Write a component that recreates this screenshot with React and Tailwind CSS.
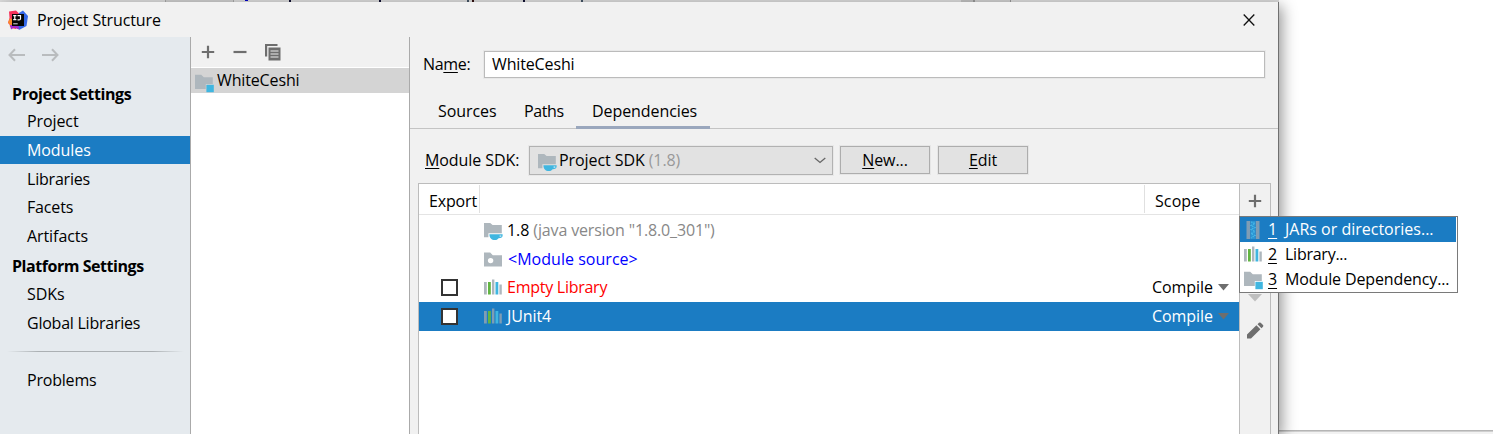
const FolderBase = ({ fill = "#aeb7bd" }) => (
  <path d="M1 2.6h6.2l2.6 2.6H19V16.6H1Z" fill={fill} />
);

function FolderModuleIcon() {
  return (
    <svg className="h-[20px] w-[20px] shrink-0" viewBox="0 0 20 20">
      <path d="M1 1.700h6.200l2.600 2.500H18.800V11H11.800v5H1Z" fill="#aeb7bd" />
      <rect x="12.400" y="11.800" width="7.400" height="7.400" fill="#40b6e0" />
    </svg>
  );
}

function SdkIcon() {
  return (
    <svg className="h-[20px] w-[20px] shrink-0" viewBox="0 0 20 20">
      <path d="M1 2h6.200l2.400 2H18.800V12.300H5.400v4H1Z" fill="#aeb7bd" />
      <path
        d="M6.400 13.200h13.200v1.500c0 1.600-1.400 2.500-4 2.500-1 1.300-2.200 1.900-3.800 1.900-3.200 0-5.400-2.200-5.400-5.900Z"
        fill="#40b6e0"
      />
      <rect x="16.600" y="14.500" width="1.700" height="1.200" fill="#d9eef6" />
    </svg>
  );
}

function SourceIcon() {
  return (
    <svg className="h-[20px] w-[20px] shrink-0" viewBox="0 0 20 20">
      <FolderBase />
      <circle cx="7.600" cy="10.600" r="2.700" fill="#fff" />
    </svg>
  );
}

function LibraryIcon({ gray = "#aeb7bd" }) {
  return (
    <svg className="h-[20px] w-[20px] shrink-0" viewBox="0 0 20 20">
      <rect x="1" y="4" width="2.800" height="12.500" fill={gray} />
      <rect x="5" y="4" width="2.800" height="12.500" fill="#62b543" />
      <rect x="9" y="1.500" width="2.400" height="15" fill={gray} />
      <rect x="12.500" y="4" width="2.800" height="12.500" fill="#40b6e0" />
      <rect x="16.400" y="6.500" width="2.400" height="10" fill={gray} />
    </svg>
  );
}

function JarIcon() {
  return (
    <svg className="h-[20px] w-[20px] shrink-0" viewBox="0 0 20 20">
      <rect x="3.500" y="1" width="3.800" height="18" fill="#7f9db5" />
      <rect x="12.700" y="1" width="3.800" height="18" fill="#7f9db5" />
      <rect x="7.700" y="1" width="4.600" height="18" fill="#2b95d3" />
      <path
        d="M8 2l4 1.500-4 2 4 2-4 2 4 2-4 2 4 2-4 2.500"
        fill="none"
        stroke="#48b8e8"
        strokeWidth="1.200"
        strokeDasharray="1.500 1"
      />
    </svg>
  );
}

function AppLogo() {
  return (
    <svg className="h-[20px] w-[20px]" viewBox="0 0 20 20">
      <path d="M1 1.500 8 .5l4 4L8 19l-5-1-1-3-2-2 1.500-5Z" fill="#f5325b" />
      <path d="M0 12.500 2 8l4 3-1 6H2l-.5-3Z" fill="#fb8a2b" />
      <path d="M11 3l4-2.500L20 6l-1.500 10-7 3.800-6-3Z" fill="#3568e8" />
      <path d="M2 15h8l1.500 4.500L6 17.500 3 19.500Z" fill="#a32bd0" />
      <rect x="4" y="4" width="12" height="12" fill="#060606" />
      <path d="M5.200 5.700h3.200M6.800 5.700v4M5.200 9.700h3.200M9.500 5.700h3v3q0 1.200-1.400 1.200H9.500" fill="none" stroke="#fff" strokeWidth="1.200" />
      <rect x="5.200" y="13.300" width="4.500" height="1" fill="#ddd" />
    </svg>
  );
}

function Arrow({ flip }) {
  return (
    <svg className={flip ? "h-[14px] w-[18px] -scale-x-100" : "h-[14px] w-[18px]"} viewBox="0 0 18 14" fill="none" stroke="#b9bcbe" strokeWidth="2">
      <path d="M17 7H1.500M7 1.300 1.500 7l5.500 5.700" />
    </svg>
  );
}

function Plus() {
  return (
    <svg className="h-[14px] w-[14px]" viewBox="0 0 14 14" stroke="#6e6e6e" strokeWidth="2.200">
      <path d="M.8 7h12.400M7 .8v12.400" />
    </svg>
  );
}

function NavItem({ label, className }) {
  return <div className={"flex h-[28.700px] items-center pl-[27px] " + (className || "")}>{label}</div>;
}

function Checkbox() {
  return <div className="h-[17px] w-[17px] border-2 border-[#333] bg-white" />;
}

function Caret({ className }) {
  return (
    <svg className={"h-[7px] w-[11px] " + className} viewBox="0 0 11 7">
      <path d="M0 0h11L5.500 6.500Z" fill="currentColor" />
    </svg>
  );
}

function Row({ className, exported, icon, children, scope, caret }) {
  return (
    <div className={"flex items-center " + className}>
      <div className="flex w-[61px] shrink-0 justify-center">{exported && <Checkbox />}</div>
      <div className="flex flex-1 items-center gap-[4px] pl-[3px]">
        {icon}
        <span className="pb-[2px]">{children}</span>
      </div>
      {scope && (
        <div className="flex w-[87px] items-center gap-[5px]">
          <span className="pb-[2px]">Compile</span>
          <Caret className={caret} />
        </div>
      )}
    </div>
  );
}

function MenuItem({ icon, num, children, className }) {
  return (
    <div className={"mr-px flex h-[25px] items-center pl-[3px] " + (className || "")}>
      {icon}
      <span className="ml-[5px] w-[17px] pb-[2px] underline decoration-1 underline-offset-[3px]">{num}</span>
      <span className="pb-[2px]">{children}</span>
    </div>
  );
}

const U = ({ children }) => <span className="underline decoration-1 underline-offset-[2px]">{children}</span>;

export default function App() {
  return (
    <div className="relative flex h-[434px] w-[1493px] flex-col overflow-hidden whitespace-nowrap bg-white font-['Open_Sans','Noto_Sans',sans-serif] text-[16px] leading-[20px] tracking-[-0.08px] text-black">
      <div className="flex h-[2px] w-full shrink-0 bg-[#dcdcdc] *:shrink-0">
        <div className="ml-[165px] h-full w-[69px] border-x border-[#aaa] bg-[#cfcfcf]" />
        <div className="ml-[11px] h-px w-[3px] bg-[#00c]" />
        <div className="ml-[41px] h-full w-[2px] bg-[#113]" />
        <div className="ml-[88px] h-full w-[2px] bg-[#113]" />
        <div className="ml-[86px] h-full w-[2px] bg-[#456]" />
        <div className="ml-[3px] h-full w-[2px] bg-[#311]" />
        <div className="ml-[49px] h-full w-[2px] bg-[#113]" />
        <div className="ml-[56px] h-full w-[2px] bg-[#456]" />
        <div className="ml-[378px] h-full w-[14px] border-r-2 border-[#999] bg-[#c2c2c2]" />
        <div className="h-full w-[36px] border-r border-[#999] bg-[#d0d0d0]" />
        <div className="h-full w-[268px]" />
        <div className="h-full w-[214px] bg-white" />
      </div>

      <div className="flex min-h-0 flex-1">
        <div className="z-10 flex w-[1279px] shrink-0 flex-col border-r border-[#707070] bg-[#f1f1f1] shadow-[3px_4px_14px_rgba(0,0,0,0.42)]">
          <header className="flex h-[35px] shrink-0 items-center pl-[8px]">
            <AppLogo />
            <span className="ml-[9px] flex-1 tracking-[-0.12px]">Project Structure</span>
            <svg className="mr-[23px] h-[12px] w-[12px]" viewBox="0 0 12 12" stroke="#111" strokeWidth="1.300">
              <path d="M.7.5l10.600 11M11.300.5.7 11.500" />
            </svg>
          </header>

          <div className="flex min-h-0 flex-1">
            <nav className="flex w-[191px] shrink-0 flex-col border-r border-[#aaa] bg-[#e5eaee]">
              <div className="flex h-[43px] items-start gap-[15px] pl-[8px] pt-[11px]">
                <Arrow />
                <Arrow flip />
              </div>
              <div className="flex h-[27px] items-center pl-[12px] pt-[1px] font-bold tracking-[-0.38px]">Project Settings</div>
              <NavItem label="Project" className="tracking-[-0.1px]" />
              <NavItem label="Modules" className="!h-[28px] bg-[#1b7cc3] text-white" />
              <NavItem label="Libraries" className="mt-[1px] tracking-[-0.2px]" />
              <NavItem label="Facets" className="pb-[1px] tracking-[-0.15px]" />
              <NavItem label="Artifacts" />
              <div className="flex h-[30px] items-center pl-[12px] pt-[1px] font-bold tracking-[-0.45px]">Platform Settings</div>
              <NavItem label="SDKs" className="pb-[2px]" />
              <NavItem label="Global Libraries" className="pb-[2px] tracking-[-0.24px]" />
              <div className="ml-[7px] mt-[13px] h-px w-[177px] bg-[linear-gradient(to_right,transparent,#abb0b3_18%,#abb0b3_82%,transparent)]" />
              <NavItem label="Problems" className="mt-[14px] tracking-[-0.2px]" />
            </nav>

            <section className="flex w-[219px] shrink-0 flex-col border-r border-[#aaa] bg-white">
              <div className="flex h-[30px] shrink-0 items-center bg-[#f1f1f1] pl-[10px]">
                <Plus />
                <svg className="ml-[18px] h-[14px] w-[14px]" viewBox="0 0 14 14" stroke="#6e6e6e" strokeWidth="2.200">
                  <path d="M.5 7h13" />
                </svg>
                <svg className="ml-[17px] h-[18px] w-[18px]" viewBox="0 0 18 18" fill="none">
                  <path d="M2.100 13.500V2H13.500" stroke="#6e6e6e" strokeWidth="2.200" />
                  <rect x="4.500" y="4.500" width="12" height="13" fill="#6e6e6e" />
                  <path d="M6.500 8h8M6.500 11h8M6.500 14h8" stroke="#eee" strokeWidth="1.200" />
                </svg>
              </div>
              <div className="mt-px flex h-[25px] items-center bg-[#d4d4d4] pl-[3px]">
                <div className="pt-[5px]"><FolderModuleIcon /></div>
                <span className="ml-[3px] pb-[2px] tracking-[-0.14px]">WhiteCeshi</span>
              </div>
            </section>

            <main className="flex min-w-0 flex-1 flex-col">
              <div className="flex h-[55px] shrink-0 items-center pl-[13px] pr-[13px]">
                <label className="w-[61px] pb-[2px] tracking-[-0.3px]">Na<U>m</U>e:</label>
                <div className="flex h-[27px] flex-1 items-center border border-[#bbb] bg-white pb-[2px] pl-[7px] tracking-[-0.14px] shadow-[0_0_0_1px_#e8e8e8]">WhiteCeshi</div>
              </div>
              <div className="flex h-[37px] shrink-0 border-b border-[#c4c4c4] pl-[12px]">
                <div className="flex h-[37px] w-[87px] items-center pl-[16px]">Sources</div>
                <div className="flex h-[37px] w-[67px] items-center pl-[15px] tracking-[-0.4px]">Paths</div>
                <div className="flex h-[37px] w-[134px] items-center border-b-3 border-[#9aa7bd] pl-[16px] pt-[3px]">Dependencies</div>
              </div>
              <div className="flex h-[54px] shrink-0 items-center pl-[15px] pt-[8px]">
                <label className="w-[104px]"><U>M</U>odule SDK:</label>
                <div className="flex h-[29px] w-[304px] items-center border border-[#b2b2b2] bg-[#e2e2e2] pl-[7px] shadow-[0_0_0_1px_#e8e8e8]">
                  <div className="pt-[3px]"><SdkIcon /></div>
                  <span className="ml-[2px] flex-1">Project SDK <span className="text-[#999]">(1.8)</span></span>
                  <svg className="mr-[6px] h-[7px] w-[12px]" viewBox="0 0 12 7" fill="none" stroke="#666" strokeWidth="1.300">
                    <path d="M.7 1 6 5.500 11.300 1" />
                  </svg>
                </div>
                <div className="ml-[7px] flex h-[28px] w-[90px] items-center justify-center border border-[#adadad] bg-[#e2e2e2] shadow-[0_0_0_1px_#e6e6e6]"><U>N</U>ew...</div>
                <div className="ml-[8px] flex h-[28px] w-[90px] items-center justify-center border border-[#adadad] bg-[#e2e2e2] shadow-[0_0_0_1px_#e6e6e6]"><U>E</U>dit</div>
              </div>

              <div className="ml-[8px] flex min-h-0 w-[853px] flex-1 border-x border-t border-[#bcbcbc]">
                <div className="flex w-[820px] shrink-0 flex-col bg-white">
                  <div className="flex h-[31px] shrink-0 items-stretch border-b border-[#e4e4e4] pb-[1px] pt-[1px]">
                    <div className="flex w-[61px] items-center border-r border-[#e0e0e0] pl-[10px] pt-[3px] tracking-[-0.16px]">Export</div>
                    <div className="w-[665px] border-r border-[#e0e0e0]" />
                    <div className="flex flex-1 items-center pl-[10px] pt-[3px] tracking-[0.1px]">Scope</div>
                  </div>
                  <Row className="h-[30px] pt-[2px]" icon={<SdkIcon />}>1.8 <span className="tracking-[-0.15px] text-[#888]">(java version "1.8.0_301")</span></Row>
                  <Row className="h-[28px] pt-[1px]" icon={<SourceIcon />}><span className="pl-[1px] tracking-[0.03px] text-[#0000ff]">&lt;Module source&gt;</span></Row>
                  <Row className="h-[29px]" exported scope caret="text-[#6e6e6e]" icon={<LibraryIcon />}><span className="tracking-[-0.26px] text-[#f00]">Empty Library</span></Row>
                  <Row className="h-[29px] bg-[#1b7cc3] text-white" exported scope caret="text-[#6e6e6e]" icon={<LibraryIcon gray="#7f9db5" />}>JUnit4</Row>
                </div>
                <div className="flex flex-1 flex-col items-center border-l border-[#bcbcbc]">
                  <div className="mt-[10px]"><Plus /></div>
                  <svg className="mt-[86px] h-[8px] w-[14px]" viewBox="0 0 14 8"><path d="M0 0h14L7 7.500Z" fill="#bfbfbf" /></svg>
                  <svg className="mt-[20px] h-[17px] w-[18px]" viewBox="0 0 18 17" fill="#6e6e6e">
                    <path d="M1 16.500V12.400L10.400 3.200l4 4L5 16.500ZM11.500 2.200 13 .8q.8-.8 1.700 0l2.300 2.300q.8.800 0 1.600L15.500 6.200Z" />
                  </svg>
                </div>
              </div>
            </main>
          </div>
        </div>

        <div className="flex flex-1 flex-col justify-end">
          <div className="h-[4px] border-t border-[#b5b5b5] bg-[#f2f2f2]"><div className="h-px bg-[#cfcfcf]" /></div>
        </div>
      </div>

      <div className="absolute left-[1239px] top-[216px] z-20 flex h-[77px] w-[219px] flex-col border border-[#7a7a7a] bg-white">
        <MenuItem num="1" icon={<JarIcon />} className="bg-[#1b7cc3] tracking-[0px] text-white">JARs or directories...</MenuItem>
        <MenuItem num="2" icon={<LibraryIcon />} className="tracking-[-0.25px]">Library...</MenuItem>
        <MenuItem num="3" icon={<FolderModuleIcon />} className="tracking-[-0.12px]">Module Dependency...</MenuItem>
      </div>
    </div>
  );
}
